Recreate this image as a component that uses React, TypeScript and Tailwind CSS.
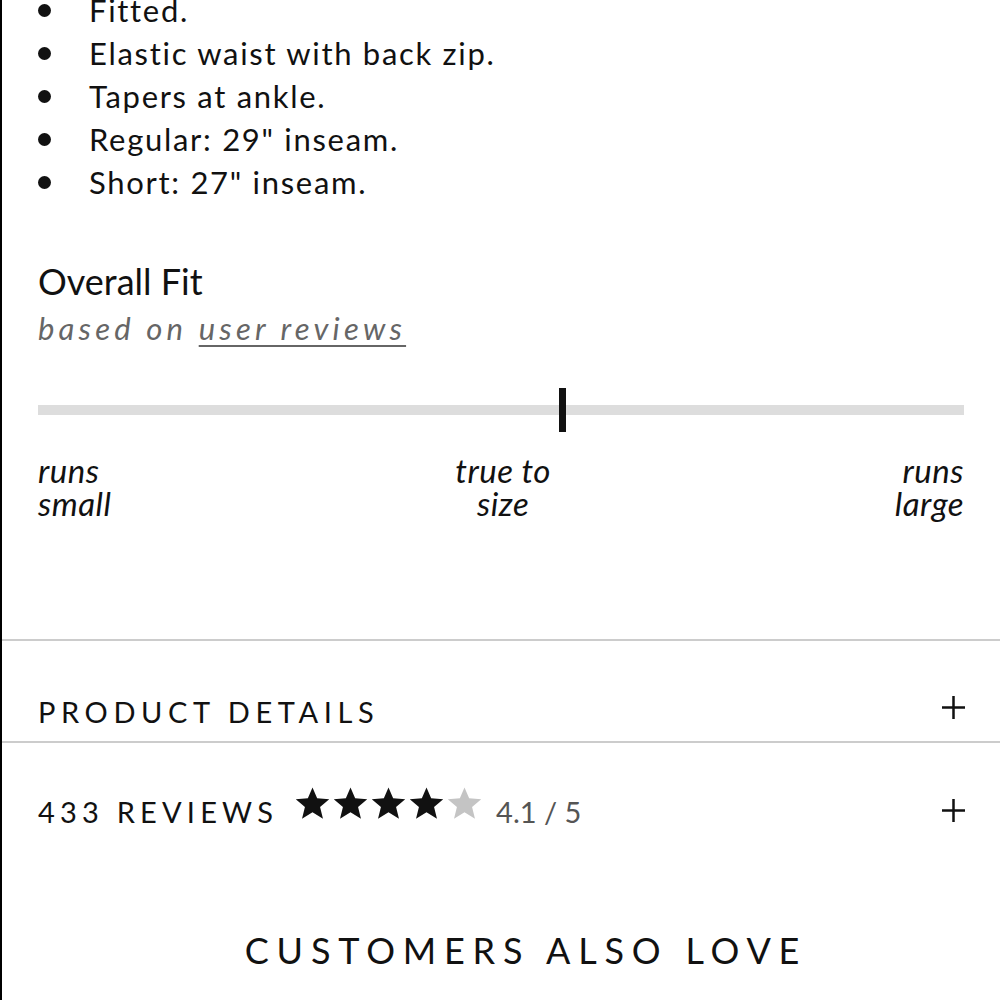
import React from "react";

const bullets = [
  "Fitted.",
  "Elastic waist with back zip.",
  "Tapers at ankle.",
  'Regular: 29" inseam.',
  'Short: 27" inseam.',
];

const Plus = () => (
  <svg width="23" height="23" viewBox="0 0 23 23" className="shrink-0">
    <rect x="10.25" y="0" width="2.5" height="23" fill="#111" />
    <rect x="0" y="10.25" width="23" height="2.5" fill="#111" />
  </svg>
);

const Star = ({ color }: { color: string }) => (
  <svg width="35" height="32" viewBox="0.5 0 23 22">
    <polygon
      points="12,0.3 15.2,7.8 23.5,8.4 17.2,13.8 19.2,21.8 12,17.4 4.8,21.8 6.8,13.8 0.5,8.4 8.8,7.8"
      fill={color}
    />
  </svg>
);

export default function App() {
  return (
    <div
      className="w-[1000px] h-[1000px] overflow-hidden bg-white border-l-2 border-black text-[#111]"
      style={{ fontFamily: "Lato, 'Noto Sans', sans-serif" }}>
      {/* ===== BULLETS ===== */}
      <div className="pl-[36px] pr-[36px]">
        <ul className="-mt-[11px]">
          {bullets.map((b) => (
            <li
              key={b}
              className="flex items-center text-[31px] leading-[43px] tracking-[1.7px]">
              <span className="w-[13px] h-[13px] rounded-full bg-[#111] mr-[38px]" />
              {b}
            </li>
          ))}
        </ul>

        {/* ===== OVERALL FIT ===== */}
        <h3 className="mt-[57px] text-[36px] leading-[40px]">Overall Fit</h3>
        <p className="mt-[7px] text-[31px] leading-[40px] italic text-[#666] tracking-[4.2px]">
          based on{" "}
          <span className="underline underline-offset-[5px] decoration-[2px]">
            user reviews
          </span>
        </p>

        <div className="relative mt-[40px] h-[44px] flex items-center">
          <div className="w-full h-[10px] bg-[#dddddd]" />
          <div className="absolute top-0 left-[56.3%] w-[7px] h-[44px] bg-[#111]" />
        </div>

        <div className="mt-[22px] flex justify-between text-[33px] leading-[33px] italic tracking-[0.5px]">
          <span>
            runs
            <br />
            small
          </span>
          <span className="text-center">
            true to
            <br />
            size
          </span>
          <span className="text-right">
            runs
            <br />
            large
          </span>
        </div>
      </div>

      {/* ===== PRODUCT DETAILS ===== */}
      <div className="mt-[119px] border-t-2 border-[#cccccc]">
        <div className="pl-[36px] pr-[35px] pt-[57px] pb-[15px] flex items-start justify-between">
          <span className="text-[29px] leading-[28px] tracking-[5.6px]">PRODUCT DETAILS</span>
          <span className="-mt-[2px]">
            <Plus />
          </span>
        </div>
      </div>

      {/* ===== REVIEWS ===== */}
      <div className="border-t-2 border-[#cccccc]">
        <div className="pl-[36px] pr-[35px] pt-[55px] flex items-start justify-between">
          <div className="flex items-start">
            <span className="text-[29px] leading-[28px] tracking-[5.2px]">433 REVIEWS</span>
            <div className="flex gap-[3px] ml-[17px] -mt-[11px]">
              <Star color="#111" />
              <Star color="#111" />
              <Star color="#111" />
              <Star color="#111" />
              <Star color="#c4c4c4" />
            </div>
            <span className="ml-[14px] text-[29px] leading-[28px] text-[#555]">4.1 / 5</span>
          </div>
          <span className="mt-[1px]">
            <Plus />
          </span>
        </div>
      </div>

      {/* ===== CUSTOMERS ALSO LOVE ===== */}
      <h2 className="mt-[106px] pl-[50px] text-center text-[36px] leading-[36px] tracking-[7.8px]">
        CUSTOMERS ALSO LOVE
      </h2>
    </div>
  );
}
